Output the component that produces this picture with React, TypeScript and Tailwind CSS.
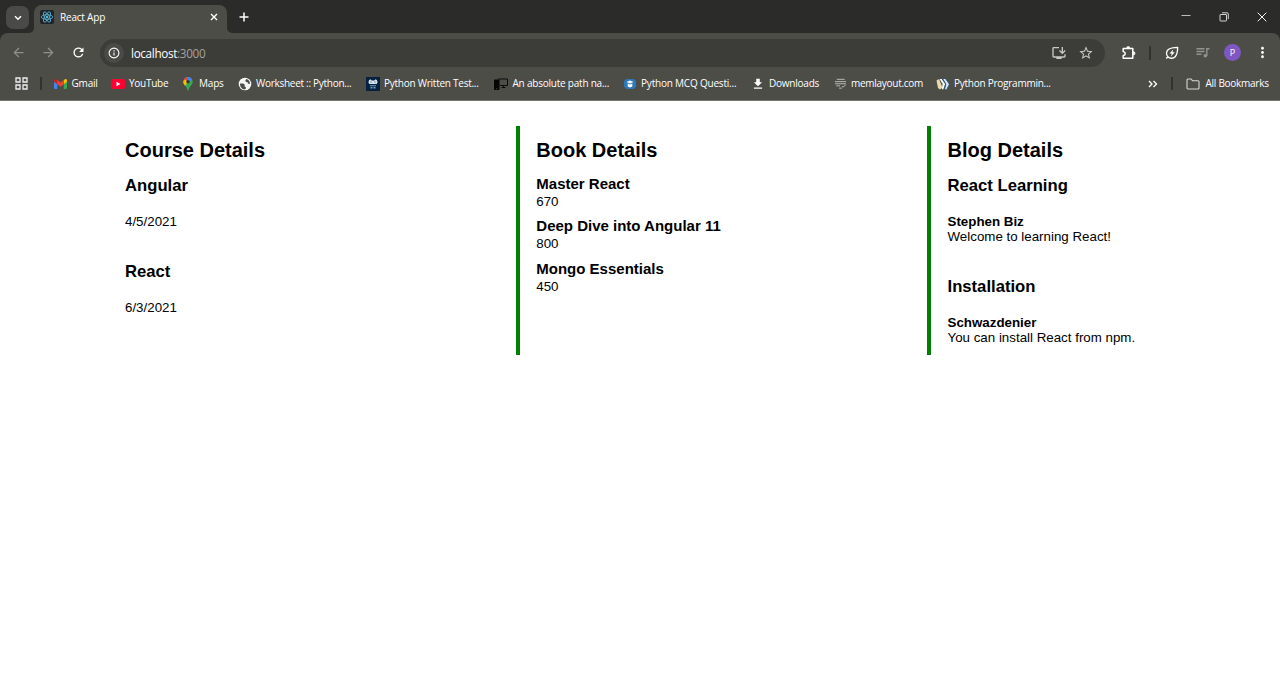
import React from "react";
import {
  MdArrowBack,
  MdArrowForward,
  MdDownload,
  MdInstallDesktop,
  MdMoreVert,
  MdRefresh,
  MdStarBorder,
} from "react-icons/md";

const ReactLogo = () => (
  <svg viewBox="0 0 14 14" className="size-[14px]">
    <rect width="14" height="14" rx="2" fill="#20242a" />
    <g fill="none" stroke="#58bcd8" strokeWidth="0.8">
      <ellipse cx="7" cy="7" rx="5.800" ry="2.300" />
      <ellipse cx="7" cy="7" rx="5.800" ry="2.300" transform="rotate(60 7 7)" />
      <ellipse cx="7" cy="7" rx="5.800" ry="2.300" transform="rotate(120 7 7)" />
    </g>
    <circle cx="7" cy="7" r="1.200" fill="#58bcd8" />
  </svg>
);

const Gmail = () => (
  <svg viewBox="0 0 24 18" className="h-[10px] w-[13px]">
    <path d="M0 3v13a2 2 0 0 0 2 2h4V7z" fill="#4285f4" />
    <path d="M24 3v13a2 2 0 0 1-2 2h-4V7z" fill="#34a853" />
    <path d="M18 1.500 20 .5C22-.8 24 .5 24 3v2l-6 4.500z" fill="#fbbc04" />
    <path d="M6 1.500 4 .5C2-.8 0 .5 0 3v2l6 4.500z" fill="#c5221f" />
    <path d="M6 1.500 12 6l6-4.500v8L12 14 6 9.500z" fill="#ea4335" />
  </svg>
);

const YouTube = () => (
  <svg viewBox="0 0 14 10" className="h-[10px] w-[14px]">
    <rect width="14" height="10" rx="2" fill="#ff0033" />
    <path d="M5.500 2.800v4.400L9.400 5z" fill="#fff" />
  </svg>
);

const Maps = () => (
  <svg viewBox="0 0 10 14" className="h-[14px] w-[10px]">
    <defs>
      <clipPath id="pin">
        <path d="M5 0a4.700 4.700 0 0 1 4.700 4.700C9.700 8 6.200 9 5.600 13c-.2 1-1 1-1.200 0C3.800 9 .3 8 .3 4.700A4.700 4.700 0 0 1 5 0z" />
      </clipPath>
    </defs>
    <g clipPath="url(#pin)">
      <rect width="10" height="14" fill="#34a853" />
      <path d="M0 0h10v2L5 6 0 4z" fill="#4285f4" />
      <path d="M0 0h4l1 1.500L2 6 0 5z" fill="#ea4335" />
      <path d="M0 4.500 2 2.500 5 5 1.500 9.500 0 8z" fill="#fbbc04" />
    </g>
    <circle cx="5" cy="4.700" r="1.700" fill="#31363c" />
  </svg>
);

const Globe = () => (
  <svg viewBox="0 0 14 14" className="size-[14px] shrink-0">
    <circle cx="7" cy="7" r="6.300" fill="#f6f6f4" />
    <path d="M2 6.500h3.200l1.600 1.200-.3 1.800 1.300.6v1.700l-1.300.7C3.800 12.200 1.900 9.700 2 6.500z" fill="#4d4d48" />
    <path d="M8.600 1.900 7.300 3.200l.5 1.500 1.700.6.700 1.500h1.900C12 4.500 10.700 2.600 8.600 1.900z" fill="#4d4d48" />
  </svg>
);

const PythonTest = () => (
  <svg viewBox="0 0 14 14" className="size-[14px]">
    <rect width="14" height="14" fill="#06213f" />
    <path d="M3 3.200 4.300 2.200 5.800 3.400h2.400l1.500-1.200L11 3.200l.6 2.300-1 1.400H3.400l-1-1.400z" fill="#d3e2ee" />
    <path d="M4.200 5h1.600M8.200 5h1.600" stroke="#06213f" strokeWidth=".5" />
    <path d="M4 8.200h6v1H4zM4.500 10h2v1.500h-2zM7.500 10h2v1.500h-2z" fill="#6d9fc4" />
  </svg>
);

const Devices = () => (
  <svg viewBox="0 0 14 14" className="size-[14px]">
    <path d="M4 2h9.500v6.500H6" fill="none" stroke="#0b0b0b" />
    <path d="M7.500 10.500h4M9.500 8.500v2" stroke="#0b0b0b" />
    <rect x="0" y="2.500" width="5.500" height="10.500" rx="1" fill="#050505" />
    <circle cx="2.800" cy="11.700" r=".5" fill="#777" />
  </svg>
);

const Mcq = () => (
  <svg viewBox="0 0 14 14" className="size-[14px]">
    <path d="M3.500 2h7L13 4v5.500L10.500 12h-7L1 9.500V4z" fill="#2b79b8" />
    <path d="M3.500 5 7 3.500 10.500 5 7 6.500zM4.700 6.500 7 7.500l2.300-1v3L7 10.500l-2.300-1z" fill="#fff" />
  </svg>
);

const Mem = () => (
  <svg viewBox="0 0 14 14" className="size-[13px]" fill="none" stroke="#c0c0bc" strokeWidth="1">
    <path d="M3 2.500h8.500M1 5h12M1 7.300h12M2.500 9.500h4M8.500 10.500h2l2-2.200M5.500 12h3" />
  </svg>
);

const Books = () => (
  <svg viewBox="0 0 14 14" className="size-[14px]">
    <path d="M.5 3.500 3 2l3.500 8.500L4 12.500 2 11z" fill="#e9d9a8" />
    <path d="M3.600 2h2.300l3.300 5-1.600 5.300H5.800L6.600 7z" fill="#f4f6f7" />
    <path d="M7.300 2h2.300l3.700 5.300L10.800 12.300H9l1.400-5z" fill="#dbe9f5" />
    <path d="m6.200 2 3.500 5-1.900 5.500M9.800 2l3.500 5.200-2.500 5" fill="none" stroke="#275b96" strokeWidth=".8" />
  </svg>
);

const Puzzle = () => (
  <svg viewBox="0 0 16 16" className="size-[16px]" fill="none" stroke="#fff" strokeWidth="1.500" strokeLinejoin="round">
    <path d="M2.200 3.500h9.600v9.700H2.200v-2.700c2.700-.4 2.700-3.700 0-4.100z" />
    <path d="M5.800 3.200a1.500 1.500 0 0 1 3 0zM12.200 6.700a1.600 1.600 0 0 1 0 3.200z" fill="#fff" stroke="none" />
    <path d="M5.800 3a1.500 1.500 0 0 1 3 0M12.300 6.700a1.600 1.600 0 0 1 0 3.200" strokeWidth="1" />
  </svg>
);

const Leaf = () => (
  <svg viewBox="0 0 16 16" className="size-[16px]" fill="none" stroke="#fff" strokeWidth="1.300" strokeLinejoin="round">
    <path d="M13.700 2.300c-4.500.1-7.300.4-9.400 2.200-2.300 2-2.300 5.300-.4 7.300s5.500 2 7.500-.3c1.900-2.200 2.200-4.800 2.300-9.200zM4 11.700 2.200 13.500" />
    <path d="M9.200 4.500 5.500 8.600h2.300l-1 3 4-4.300H8.500z" fill="#fff" stroke="none" />
  </svg>
);

const Playlist = () => (
  <svg viewBox="0 0 14 12" className="h-[12px] w-[14px]" fill="none" stroke="#91918d" strokeWidth="1.400">
    <path d="M.5 1.700h8M.5 4.500h8M.5 7.300h5M10.800 9V1.700h2.700" />
    <circle cx="9.300" cy="8.800" r="1.800" fill="#91918d" stroke="none" />
  </svg>
);

type Bookmark = { label: string; icon: React.ReactNode; box: string; text: string };

const bookmarks: Bookmark[] = [
  { label: "Gmail", icon: <Gmail />, box: "w-[58px]", text: "ml-[4.500px] tracking-[-0.2px]" },
  { label: "YouTube", icon: <YouTube />, box: "w-[70px]", text: "ml-[4px] tracking-[-0.27px]" },
  { label: "Maps", icon: <Maps />, box: "w-[57px]", text: "ml-[4px] tracking-[-0.2px]" },
  { label: "Worksheet :: Python...", icon: <Globe />, box: "w-[128px]", text: "ml-[4px] tracking-[-0.28px]" },
  { label: "Python Written Test...", icon: <PythonTest />, box: "w-[128px]", text: "ml-[4px] tracking-[-0.25px]" },
  { label: "An absolute path na...", icon: <Devices />, box: "w-[129px]", text: "ml-[4.500px] tracking-[-0.22px]" },
  { label: "Python MCQ Questi...", icon: <Mcq />, box: "w-[128px]", text: "ml-[4px] tracking-[-0.2px]" },
  { label: "Downloads", icon: <MdDownload className="size-[14px] shrink-0" />, box: "w-[82px]", text: "ml-[4px] tracking-[-0.23px]" },
  { label: "memlayout.com", icon: <Mem />, box: "w-[103px]", text: "ml-[4px] tracking-[-0.28px]" },
  { label: "Python Programmin...", icon: <Books />, box: "w-[128px]", text: "ml-[4px] tracking-[-0.25px]" },
];

function TabStrip() {
  return (
    <div className="flex h-[33px] bg-[#2b2b29]">
      <div className="mt-[6px] ml-[6px] flex size-[23px] items-center justify-center rounded-[7px] bg-[#4a4a46]">
        <svg viewBox="0 0 8 6" className="h-[6px] w-[8px]" fill="none" stroke="#fff" strokeWidth="1.500">
          <path d="M1 1.200 4 4.200l3-3" />
        </svg>
      </div>
      <svg viewBox="0 0 5 5" className="mt-auto size-[5px]" fill="#4d4d48">
        <path d="M5 0v5H0a5 5 0 0 0 5-5z" />
      </svg>
      <div className="mt-[5px] flex w-[193px] items-center rounded-t-[8px] bg-[#4d4d48] pr-[9px] pb-[4px] pl-[6px]">
        <ReactLogo />
        <span className="ml-[6px] flex-1 text-[10px] tracking-[-0.2px] whitespace-nowrap">React App</span>
        <svg viewBox="0 0 8 8" className="size-[8px]" stroke="#fff" strokeWidth="1.400">
          <path d="m1 1 6 6M7 1 1 7" />
        </svg>
      </div>
      <svg viewBox="0 0 5 5" className="mt-auto size-[5px]" fill="#4d4d48">
        <path d="M0 0v5h5a5 5 0 0 1-5-5z" />
      </svg>
      <svg viewBox="0 0 10 10" className="mt-[12px] ml-[7px] size-[10px]" stroke="#fff" strokeWidth="1.500">
        <path d="M5 .5v9M.5 5h9" />
      </svg>
      <div className="ml-auto flex gap-[28px] pt-[12px] pr-[13.500px]">
        <svg viewBox="0 0 10 10" className="size-[10px]" stroke="#bdbdbd" strokeWidth="1">
          <path d="M.5 3.500h9" />
        </svg>
        <svg viewBox="0 0 10 10" className="size-[10px]" fill="none" stroke="#e8e8e8" strokeWidth=".9">
          <rect x="1" y="2.500" width="6.500" height="6.500" rx=".5" />
          <path d="M3 .8h5a1.300 1.300 0 0 1 1.300 1.300v5" />
        </svg>
        <svg viewBox="0 0 10 10" className="size-[10px]" stroke="#f4f4f4" strokeWidth="1">
          <path d="m.7.700 8.600 8.600M9.300.700.700 9.300" />
        </svg>
      </div>
    </div>
  );
}

function Toolbar() {
  return (
    <div className="flex h-[39px] items-center">
      <MdArrowBack className="ml-[11px] size-[15px] text-[#8f8f8b]" />
      <MdArrowForward className="ml-[15px] size-[15px] text-[#8f8f8b]" />
      <MdRefresh className="ml-[15px] size-[15px]" />
      <div className="ml-[14px] flex h-[28px] w-[1005px] items-center rounded-full bg-[#3c3c39] pr-[11px] pl-[4px]">
        <div className="flex size-[20px] items-center justify-center rounded-full bg-[#4a4a46]">
          <svg viewBox="0 0 12 12" className="size-[12px]" fill="none" stroke="#fff" strokeWidth="1.100">
            <circle cx="6" cy="6" r="4.900" />
            <path d="M6 5.400v3.200M6 3.200v1.200" />
          </svg>
        </div>
        <span className="ml-[7px] pt-[2px] text-[11.700px] tracking-[-0.32px]">
          localhost<span className="text-[#a3a3a0]">:3000</span>
        </span>
        <MdInstallDesktop className="ml-auto size-[16px] text-[#c7c7c3]" />
        <MdStarBorder className="ml-[11px] size-[16px] text-[#c7c7c3]" />
      </div>
      <div className="ml-[15.500px]">
        <Puzzle />
      </div>
      <span className="ml-[12.500px] h-[14px] w-[2px] bg-[#32322f]" />
      <div className="ml-[13px]">
        <Leaf />
      </div>
      <div className="ml-[16px]">
        <Playlist />
      </div>
      <span className="ml-[14px] flex size-[17px] items-center justify-center rounded-full bg-[#7e57c2] text-[9px]">P</span>
      <MdMoreVert className="ml-[13px] size-[17px]" />
    </div>
  );
}

function BookmarksBar() {
  return (
    <div className="flex h-[29px] items-center border-b border-[#75756f] pb-[5px] text-[10px] whitespace-nowrap">
      <svg viewBox="0 0 13 13" className="ml-[15px] size-[13px]" fill="none" stroke="#eee" strokeWidth="1.300">
        <path d="M1 1h4v4H1zM8 1h4v4H8zM1 8h4v4H1zM8 8h4v4H8z" />
      </svg>
      <span className="mr-[11px] ml-[12px] h-[13px] w-[2px] bg-[#32322f]" />
      {bookmarks.map((b) => (
        <div key={b.label} className={`flex shrink-0 items-center ${b.box}`}>
          <span className="flex w-[14px] shrink-0 justify-center">{b.icon}</span>
          <span className={b.text}>{b.label}</span>
        </div>
      ))}
      <svg viewBox="0 0 10 8" className="ml-auto h-[8px] w-[10px]" fill="none" stroke="#fff" strokeWidth="1.300">
        <path d="m1 1 3 3-3 3M5.500 1l3 3-3 3" />
      </svg>
      <span className="ml-[13px] h-[13px] w-[2px] bg-[#32322f]" />
      <svg viewBox="0 0 14 12" className="ml-[12.500px] h-[12px] w-[14px]" fill="none" stroke="#d8d8d4" strokeWidth="1.100">
        <path d="M1 2a1 1 0 0 1 1-1h3l1.500 1.700H12a1 1 0 0 1 1 1V10a1 1 0 0 1-1 1H2a1 1 0 0 1-1-1z" />
      </svg>
      <span className="ml-[6px] w-[74.500px] tracking-[-0.27px]">All Bookmarks</span>
    </div>
  );
}

const Title = ({ children }: { children: React.ReactNode }) => (
  <h1 className="pt-[13px] text-[20px] leading-[23px] font-bold">{children}</h1>
);

const courses = [
  { name: "Angular", date: "4/5/2021" },
  { name: "React", date: "6/3/2021" },
];
const books = [
  { name: "Master React", price: 670 },
  { name: "Deep Dive into Angular 11", price: 800 },
  { name: "Mongo Essentials", price: 450 },
];
const blogs = [
  { title: "React Learning", author: "Stephen Biz", body: "Welcome to learning React!" },
  { title: "Installation", author: "Schwazdenier", body: "You can install React from npm." },
];

export default function App() {
  return (
    <div className="h-[677px] w-[1280px] overflow-hidden bg-white font-['Liberation_Sans',Arial,sans-serif] text-black">
      <header className="bg-[#2b2b29] font-['Open_Sans','Noto_Sans',sans-serif] text-white">
        <TabStrip />
        <div className="rounded-t-[8px] bg-[#4d4d48]">
          <Toolbar />
          <BookmarksBar />
        </div>
      </header>
      <main className="mt-[25px] ml-[105px] flex h-[229px] text-[13.330px] leading-[15px]">
        <section className="w-[411px] pl-[20px]">
          <Title>Course Details</Title>
          {courses.map((c) => (
            <div key={c.name} className="h-[86px] pt-[14px]">
              <h2 className="text-[16.670px] leading-[19px] font-bold">{c.name}</h2>
              <p className="mt-[18.500px]">{c.date}</p>
            </div>
          ))}
        </section>
        <section className="w-[411px] border-l-4 border-[#008000] pl-[16.300px]">
          <Title>Book Details</Title>
          {books.map((b) => (
            <div key={b.name} className="h-[42.660px] pt-[12.700px]">
              <h3 className="text-[15px] leading-[17px] font-bold">{b.name}</h3>
              <p className="mt-[2px]">{b.price}</p>
            </div>
          ))}
        </section>
        <section className="border-l-4 border-[#008000] pl-[16.500px]">
          <Title>Blog Details</Title>
          {blogs.map((b) => (
            <div key={b.title} className="h-[101.300px] pt-[14px]">
              <h2 className="text-[16.670px] leading-[19px] font-bold">{b.title}</h2>
              <p className="mt-[18.500px] font-bold">{b.author}</p>
              <p className="mt-[0.700px]">{b.body}</p>
            </div>
          ))}
        </section>
      </main>
    </div>
  );
}
